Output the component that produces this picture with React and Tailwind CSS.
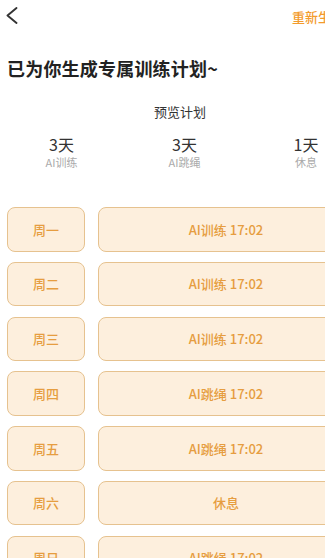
import React from 'react'

const days = [
  { day: '周一', plan: 'AI训练 17:02' },
  { day: '周二', plan: 'AI训练 17:02' },
  { day: '周三', plan: 'AI训练 17:02' },
  { day: '周四', plan: 'AI跳绳 17:02' },
  { day: '周五', plan: 'AI跳绳 17:02' },
  { day: '周六', plan: '休息' },
  { day: '周日', plan: 'AI跳绳 17:02' },
]

const stats = [
  { num: '3天', label: 'AI训练' },
  { num: '3天', label: 'AI跳绳' },
  { num: '1天', label: '休息' },
]

export default function App() {
  return (
    <div
      className="w-[325px] h-[558px] overflow-hidden bg-white"
      style={{ fontFamily: '"Noto Sans CJK SC", "Noto Sans", sans-serif' }}
    >
      <div className="w-[360px]">
        {/* 顶部栏 */}
        <div className="h-[31px] flex items-center justify-between pl-[6px] pr-[16px]">
          <svg width="12" height="17" viewBox="0 0 12 17" className="mt-[-1px]">
            <polyline points="10.5,1 1.5,8.5 10.5,16" fill="none" stroke="#333" strokeWidth="1.9" strokeLinecap="round" strokeLinejoin="round" />
          </svg>
          <span className="text-[13px] leading-none text-[#f39b2c] font-medium mt-[1px]">重新生成</span>
        </div>

        <h1 className="mt-[27px] pl-[7px] text-[18px] leading-[20px] font-bold text-[#222] tracking-[0.2px]">
          已为你生成专属训练计划~
        </h1>

        <p className="mt-[26px] text-center text-[13px] leading-[16px] text-[#333]">预览计划</p>

        <div className="mt-[14px] grid grid-cols-[123px_123px_120px]">
          {stats.map((s, i) => (
            <div key={i} className="flex flex-col items-center">
              <span className="text-[16px] leading-[20px] text-[#333]">{s.num}</span>
              <span className="text-[11px] leading-[14px] mt-[1px] text-[#aaa]">{s.label}</span>
            </div>
          ))}
        </div>

        {/* 每日计划 */}
        <div className="mt-[38px] flex flex-col gap-[10.3px] pl-[7px] pr-[6px]">
          {days.map((d, i) => (
            <div key={i} className="flex gap-[13px] h-[44.5px]">
              <div className="w-[78px] rounded-[8px] border border-[#e6c28f] bg-[#fdefdd] flex items-center justify-center text-[13px] font-medium text-[#e69d40]">
                {d.day}
              </div>
              <div className="flex-1 rounded-[8px] border border-[#e6c28f] bg-[#fdefdd] flex items-center justify-center text-[13px] font-medium text-[#e69d40]">
                {d.plan}
              </div>
            </div>
          ))}
        </div>
      </div>
    </div>
  )
}
